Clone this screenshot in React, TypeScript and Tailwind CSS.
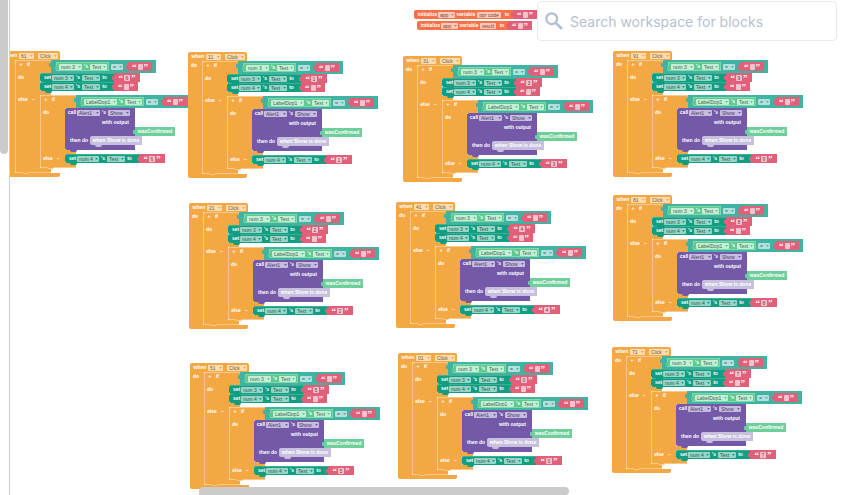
import type { ReactNode } from "react";

type Tone = "orange" | "set" | "getter" | "compare" | "purple" | "init";

const chipTone: Record<Tone, string> = {
  orange: "bg-[#fadcb0] text-[#6e5a3c]",
  set: "bg-[#97d5c6] text-[#2f5a50]",
  getter: "bg-[#c4efd6] text-[#3d6350]",
  compare: "bg-[#b3e0dc] text-[#3f6664]",
  purple: "bg-[#c6bcde] text-[#453a66]",
  init: "bg-[#fcc8b8] text-[#7a4334]",
};

const caretTone: Record<Tone, string> = {
  orange: "fill-[#f0a03c]",
  set: "fill-[#0f9e82]",
  getter: "fill-[#5cc48c]",
  compare: "fill-[#41b3a3]",
  purple: "fill-[#7359a8]",
  init: "fill-[#fa7148]",
};

function Picker({ value, label, tone, width }: { value: string; label: string; tone: Tone; width: string }) {
  return (
    <span className={`relative block h-[6px] shrink-0 ${width}`}>
      <select
        aria-label={label}
        className={`block h-[6px] w-full appearance-none rounded-[1px] py-0 pr-0 pl-[2px] text-[5px] leading-[6px] ${chipTone[tone]}`}
      >
        <option>{value}</option>
      </select>
      <svg viewBox="0 0 4 3" className={`pointer-events-none absolute top-[2px] right-[1px] h-[2px] w-[3px] ${caretTone[tone]}`}>
        <path d="M0 0h4L2 3z" />
      </svg>
    </span>
  );
}

function Word({ children, width = "" }: { children: ReactNode; width?: string }) {
  return <span className={`block shrink-0 text-center text-[5px] leading-[9px] font-bold whitespace-nowrap text-white ${width}`}>{children}</span>;
}

function Tab({ color }: { color: string }) {
  return <span className={`absolute top-[3px] -left-[2px] h-[4px] w-[2px] rounded-l-[1px] ${color}`} />;
}

function Bump({ color }: { color: string }) {
  return <span className={`absolute -bottom-[2px] left-[5px] z-10 h-[2px] w-[7px] rounded-b-[2px] ${color}`} />;
}

function Quote({ children }: { children: string }) {
  return (
    <span className="block h-[9px] font-['Liberation_Serif',serif] text-[9px] leading-[11px] font-bold text-white">
      {children}
    </span>
  );
}

function TextValue({ value = "", label }: { value?: string; label: string }) {
  return (
    <div className={`relative flex h-[9px] shrink-0 items-center justify-center gap-[1px] bg-[#e0607a] ${value ? "w-[26px]" : "w-[24px]"}`}>
      <Tab color="bg-[#e0607a]" />
      <Quote>“</Quote>
      <input
        aria-label={label}
        defaultValue={value}
        className={`block h-[6px] rounded-[1px] bg-[#f4c3cd] p-0 text-center text-[5px] leading-[6px] text-[#6d3340] ${value ? "w-[6px]" : "w-[5px]"}`}
      />
      <Quote>”</Quote>
    </div>
  );
}

function SetBlock({ target, value }: { target: string; value?: string }) {
  return (
    <div className="flex">
      <div className="relative flex h-[9px] w-[74px] shrink-0 items-center rounded-l-[2px] bg-[#0f9e82] pl-[3px] shadow-[inset_0_1px_0_#3db096]">
        <Word width="w-[9px]">set</Word>
        <Picker value={target} label="Component" tone="set" width="w-[22px]" />
        <Word width="w-[8px]">'s</Word>
        <Picker value="Text" label="Property" tone="set" width="w-[18px]" />
        <Word width="w-[9px]">to</Word>
        <Bump color="bg-[#0f9e82]" />
      </div>
      <TextValue value={value} label={`${target} text`} />
    </div>
  );
}

function Compare({ component, wide = false }: { component: string; wide?: boolean }) {
  return (
    <div className="relative flex h-[13px] shrink-0 items-center bg-[#41b3a3] pr-[4px] pl-[5px]">
      <Tab color="bg-[#41b3a3]" />
      <div className={`relative flex h-[9px] shrink-0 items-center border border-[#7fd9a8] bg-[#5fc990] pl-[2px] ${wide ? "w-[63px]" : "w-[53px]"}`}>
        <Tab color="bg-[#5fc990]" />
        <Picker value={component} label="Component" tone="getter" width={wide ? "w-[33px]" : "w-[23px]"} />
        <Word width="w-[8px]">'s</Word>
        <Picker value="Text" label="Property" tone="getter" width="w-[17px]" />
      </div>
      <div className="flex pr-[5px] pl-[2px]">
        <Picker value="=" label="Operator" tone="compare" width="w-[12px]" />
      </div>
      <TextValue label="Compared text" />
    </div>
  );
}

function IfBlock({ test, then, otherwise }: { test: ReactNode; then: ReactNode; otherwise: ReactNode }) {
  return (
    <div className="relative">
      <div className="flex">
        <div className="flex h-[13px] w-[36px] shrink-0 items-start rounded-tl-[2px] border-l border-[#f8c98b] bg-[#f3a844] pl-[3px] shadow-[inset_0_1px_0_#f8c98b]">
          <Word width="w-[4px]">+</Word>
          <Word width="w-[11px]">if</Word>
        </div>
        {test}
      </div>
      <div className="flex">
        <div className="w-[25px] shrink-0 border-l border-[#f8c98b] bg-[#f3a844] pl-[2px]">
          <Word width="w-[6px]">do</Word>
        </div>
        <div>{then}</div>
      </div>
      <div className="h-[4px] w-[36px] border-l border-[#f8c98b] bg-[#f3a844]" />
      <div className="flex">
        <div className="flex w-[25px] shrink-0 items-start border-l border-[#f8c98b] bg-[#f3a844] pl-[2px]">
          <Word width="w-[10px]">else</Word>
          <Word width="w-[11px]">−</Word>
        </div>
        <div>{otherwise}</div>
      </div>
      <div className="h-[5px] w-[36px] rounded-bl-[2px] border-b border-l border-[#f8c98b] bg-[#f3a844]" />
      <span className="absolute -bottom-[1px] left-[7px] z-10 h-[2px] w-[7px] rounded-b-[2px] border-b border-[#f8c98b] bg-[#f3a844]" />
    </div>
  );
}

function AlertBlock() {
  return (
    <div className="relative h-[42px] w-[70px] rounded-l-[2px] bg-[#7359a8]">
      <div className="flex items-center pl-[2px]">
        <Word width="w-[10px]">call</Word>
        <Picker value="Alert1" label="Component" tone="purple" width="w-[23px]" />
        <Word width="w-[8px]">'s</Word>
        <Picker value="Show" label="Method" tone="purple" width="w-[22px]" />
      </div>
      <div className="flex justify-end pt-[1px] pr-[6px]">
        <Word>with output</Word>
      </div>
      <div className="flex pl-[70px]">
        <div className="relative w-[40px] shrink-0 bg-[#6fcf9b]">
          <Tab color="bg-[#6fcf9b]" />
          <Word>wasConfirmed</Word>
        </div>
      </div>
      <div className="flex pl-[3px]">
        <Word width="w-[22px]">then do</Word>
        <div className="relative w-[52px] shrink-0 rounded-l-[2px] bg-[#c8bfdf]">
          <Word>when Show is done</Word>
          <Bump color="bg-[#c8bfdf]" />
        </div>
      </div>
      <Bump color="bg-[#7359a8]" />
    </div>
  );
}

function EventBlock({ digit }: { digit: string }) {
  return (
    <article aria-label={`when ${digit}1 Click`}>
      <div className="flex h-[9px] w-[59px] items-center rounded-t-[2px] bg-[#f3a844] pl-[3px]">
        <Word width="w-[14px]">when</Word>
        <div className="flex gap-[4px] pl-[1px]">
          <Picker value={`${digit}1`} label="Component" tone="orange" width="w-[15px]" />
          <Picker value="Click" label="Event" tone="orange" width="w-[20px]" />
        </div>
      </div>
      <div className="flex">
        <div className="w-[14px] shrink-0 bg-[#f3a844] pl-[3px]">
          <Word width="w-[6px]">do</Word>
        </div>
        <IfBlock
          test={<Compare component="num 3" />}
          then={
            <>
              <SetBlock target="num 3" value={digit} />
              <SetBlock target="num 4" />
            </>
          }
          otherwise={
            <IfBlock
              test={<Compare component="LabelDop1" wide />}
              then={<AlertBlock />}
              otherwise={<SetBlock target="num 4" value={digit} />}
            />
          }
        />
      </div>
      <div className="h-[4px] w-[59px] rounded-b-[2px] bg-[#f3a844]" />
    </article>
  );
}

function InitBlock({ name, chip }: { name: string; chip: string }) {
  return (
    <div className="flex">
      <div className="flex h-[9px] items-center rounded-l-[2px] bg-[#fa7148] pl-[3px]">
        <Word width="w-[21px]">initialize</Word>
        <Picker value="app" label="Scope" tone="init" width="w-[17px]" />
        <Word width="w-[22px]">variable</Word>
        <input
          aria-label="Variable name"
          defaultValue={name}
          className={`block h-[6px] rounded-[1px] bg-[#fcc8b8] p-0 text-center text-[5px] leading-[6px] text-[#7a4334] ${chip}`}
        />
        <Word width="w-[12px]">to</Word>
      </div>
      <TextValue label={`${name} initial text`} />
    </div>
  );
}

const events = [
  { digit: "6", place: "left-[-9px] top-[51px]" },
  { digit: "1", place: "left-[178px] top-[52px]" },
  { digit: "3", place: "left-[393px] top-[56px]" },
  { digit: "9", place: "left-[603px] top-[51px]" },
  { digit: "2", place: "left-[179px] top-[203px]" },
  { digit: "4", place: "left-[386px] top-[202px]" },
  { digit: "8", place: "left-[603px] top-[195px]" },
  { digit: "5", place: "left-[180px] top-[363px]" },
  { digit: "0", place: "left-[388px] top-[353px]" },
  { digit: "7", place: "left-[602px] top-[347px]" },
];

export default function App() {
  return (
    <div className="flex h-screen overflow-hidden bg-white font-['Liberation_Sans',Arial,sans-serif]">
      <div className="w-[10px] shrink-0 border-r border-[#ccd2db]">
        <div className="h-[154px] w-[8px] rounded-b-[4px] bg-[#cbcbcb]" />
      </div>
      <main className="relative min-w-0 flex-1 overflow-hidden">
        <div className="absolute top-[10px] left-[404px]">
          <InitBlock name="opr code" chip="w-[24px]" />
        </div>
        <div className="absolute top-[21px] left-[407px]">
          <InitBlock name="result" chip="w-[16px]" />
        </div>
        {events.map(({ digit, place }) => (
          <div key={digit} className={`absolute ${place}`}>
            <EventBlock digit={digit} />
          </div>
        ))}
        <div className="absolute bottom-0 left-[189px] z-20 h-[8px] w-[370px] rounded-t-[4px] rounded-br-[4px] bg-[#cbcbcb]" />
        <label className="absolute top-[1px] right-[4px] z-20 flex h-[40px] w-[300px] items-center gap-[7px] rounded-[4px] border border-[#e9e9eb] bg-white pl-[7px]">
          <svg viewBox="0 0 18 18" className="h-[18px] w-[18px] shrink-0 fill-none stroke-[#b4bfd3]">
            <circle cx="6.7" cy="6.7" r="5.4" strokeWidth="2.2" />
            <path d="M10.8 10.8L17 17" strokeWidth="2.6" />
          </svg>
          <input
            type="search"
            aria-label="Search workspace for blocks"
            placeholder="Search workspace for blocks"
            className="min-w-0 flex-1 bg-transparent pt-[2px] font-['Inter',sans-serif] text-[14px] leading-[20px] text-[#4b5563] outline-none placeholder:text-[#b6bfd0]"
          />
        </label>
      </main>
    </div>
  );
}
